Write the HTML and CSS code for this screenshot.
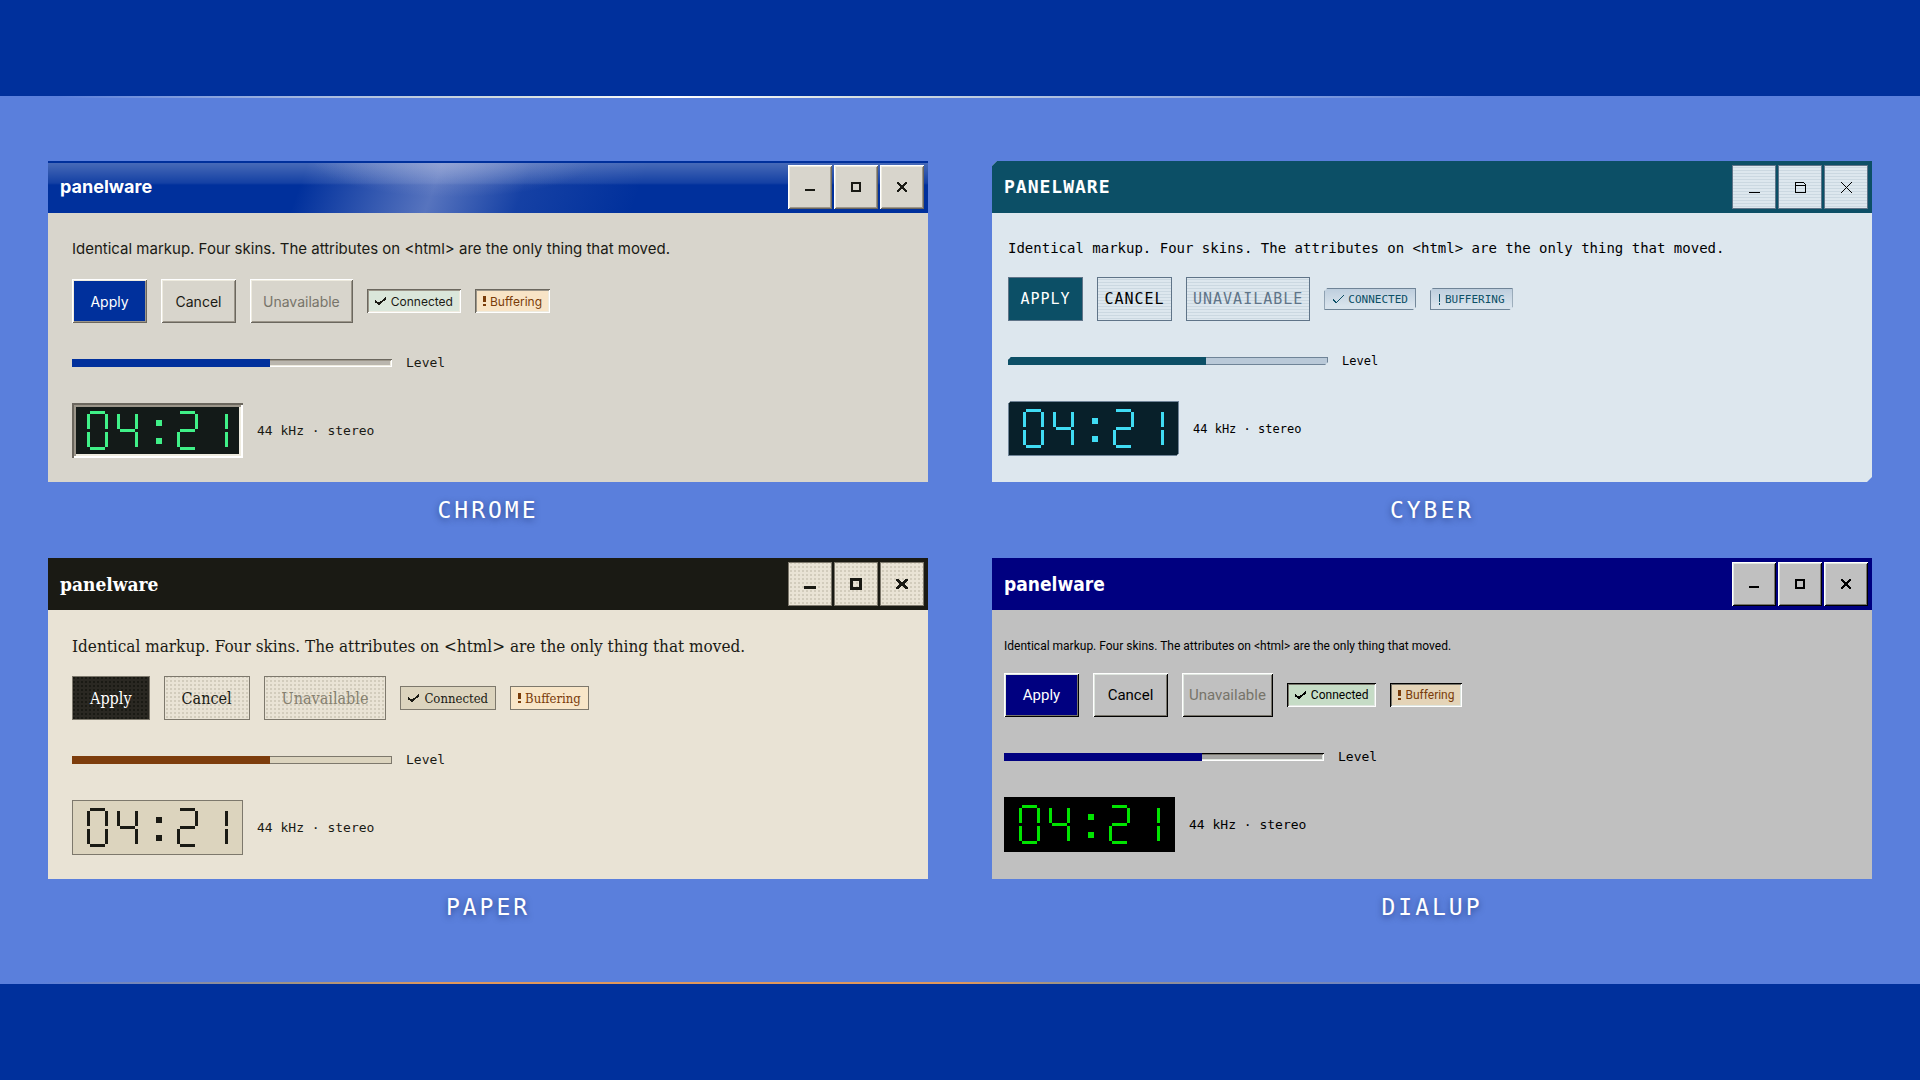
FILE: index.html
```html
<!DOCTYPE html>
<html lang="en">
<head>
<meta charset="utf-8">
<meta name="viewport" content="width=device-width, initial-scale=1">
<title>panelware</title>
<link rel="stylesheet" href="styles.css">
</head>
<body>
<svg class="sprite" aria-hidden="true">
  <defs>
    <symbol id="min" viewBox="0 0 12 12"><path d="M1 8h10v2H1z"/></symbol>
    <symbol id="max" viewBox="0 0 12 12"><path fill-rule="evenodd" d="M1 1h10v10H1zM3 3v6h6V3z"/></symbol>
    <symbol id="close" viewBox="0 0 12 12"><path d="M1 1h2v1h1v1h1v1h2V3h1V2h1V1h2v2h-1v1H9v1H8v2h1v1h1v1h1v2H9v-1H8V9H7V8H5v1H4v1H3v1H1V9h1V8h1V7h1V5H3V4H2V3H1z"/></symbol>
    <symbol id="min-thin" viewBox="0 0 12 12"><path d="M1 11h11v1H1z"/></symbol>
    <symbol id="max-thin" viewBox="0 0 12 12"><path fill-rule="evenodd" d="M1 1h9v1h1v1h1v9H1zM2 2v2h9V3h-1V2zM2 5v6h9V5z"/></symbol>
    <symbol id="close-thin" viewBox="0 0 12 12"><path fill="none" stroke="currentColor" d="M1 1l11 11M12 1L1 12"/></symbol>
    <symbol id="min-bold" viewBox="0 0 12 12"><path d="M0 8h12v3H0z"/></symbol>
    <symbol id="max-bold" viewBox="0 0 12 12"><path fill-rule="evenodd" d="M0 0h12v12H0zM3 3v6h6V3z"/></symbol>
    <symbol id="close-bold" viewBox="0 0 12 12"><path d="M0 1h3v1h1v1h1v1h2V3h1V2h1V1h3v2h-1v1h-1v1H9v2h1v1h1v1h1v2H9v-1H8V9H7V8H5v1H4v1H3v1H0V9h1V8h1V7h1V5H2V4H1V3H0z"/></symbol>
    <symbol id="check" viewBox="0 0 12 10"><path fill="none" stroke="currentColor" stroke-width="2" d="M0 5l4 3 7-6"/></symbol>
    <symbol id="check-thin" viewBox="0 0 12 10"><path fill="none" stroke="currentColor" d="M1 5l3 4 8-8"/></symbol>
    <symbol id="bang" viewBox="0 0 3 12"><path d="M0 1h3v6H0zM0 9h3v2H0z"/></symbol>
    <symbol id="bang-thin" viewBox="0 0 3 12"><path d="M1 1h1v8H1zM1 10h1v2H1z"/></symbol>
    <symbol id="clock" viewBox="0 0 141 39">
      <g><rect x="3" width="15" height="3"/><rect x="3" y="36" width="15" height="3"/><rect y="3" width="3" height="15"/><rect y="21" width="3" height="15"/><rect x="18" y="3" width="3" height="15"/><rect x="18" y="21" width="3" height="15"/></g>
      <g><rect x="30" y="3" width="3" height="15"/><rect x="33" y="18" width="15" height="3"/><rect x="48" y="3" width="3" height="15"/><rect x="48" y="21" width="3" height="15"/></g>
      <g><rect x="69" y="9" width="6" height="6"/><rect x="69" y="27" width="6" height="6"/></g>
      <g><rect x="93" width="15" height="3"/><rect x="108" y="3" width="3" height="15"/><rect x="93" y="18" width="15" height="3"/><rect x="90" y="21" width="3" height="15"/><rect x="93" y="36" width="15" height="3"/></g>
      <g><rect x="138" y="3" width="3" height="15"/><rect x="138" y="21" width="3" height="15"/></g>
    </symbol>
  </defs>
</svg>

<main class="stage">
  <figure class="sample">
    <section class="panel chrome">
      <header class="titlebar">
        <h2 class="title">panelware</h2>
        <button class="winbtn" aria-label="Minimize"><svg><use href="#min"/></svg></button>
        <button class="winbtn" aria-label="Maximize"><svg><use href="#max"/></svg></button>
        <button class="winbtn" aria-label="Close"><svg><use href="#close"/></svg></button>
      </header>
      <div class="content">
        <p class="lead">Identical markup. Four skins. The attributes on &lt;html&gt; are the only thing that moved.</p>
        <div class="row">
          <button class="btn primary">Apply</button>
          <button class="btn">Cancel</button>
          <button class="btn" disabled>Unavailable</button>
          <span class="tag ok"><svg class="tick"><use href="#check"/></svg>Connected</span>
          <span class="tag warn"><svg class="bang"><use href="#bang"/></svg>Buffering</span>
        </div>
        <div class="row">
          <progress class="level" id="level-chrome" max="100" value="62"></progress>
          <label class="note" for="level-chrome">Level</label>
        </div>
        <div class="row">
          <div class="lcd" role="img" aria-label="04:21"><svg><use href="#clock"/></svg></div>
          <span class="note">44 kHz · stereo</span>
        </div>
      </div>
    </section>
    <figcaption class="name">CHROME</figcaption>
  </figure>

  <figure class="sample">
    <section class="panel cyber">
      <header class="titlebar">
        <h2 class="title">PANELWARE</h2>
        <button class="winbtn" aria-label="Minimize"><svg><use href="#min-thin"/></svg></button>
        <button class="winbtn" aria-label="Maximize"><svg><use href="#max-thin"/></svg></button>
        <button class="winbtn" aria-label="Close"><svg><use href="#close-thin"/></svg></button>
      </header>
      <div class="content">
        <p class="lead">Identical markup. Four skins. The attributes on &lt;html&gt; are the only thing that moved.</p>
        <div class="row">
          <button class="btn primary">APPLY</button>
          <button class="btn">CANCEL</button>
          <button class="btn" disabled>UNAVAILABLE</button>
          <span class="tag ok"><svg class="tick"><use href="#check-thin"/></svg>CONNECTED</span>
          <span class="tag warn"><svg class="bang"><use href="#bang-thin"/></svg>BUFFERING</span>
        </div>
        <div class="row">
          <progress class="level" id="level-cyber" max="100" value="62"></progress>
          <label class="note" for="level-cyber">Level</label>
        </div>
        <div class="row">
          <div class="lcd" role="img" aria-label="04:21"><svg><use href="#clock"/></svg></div>
          <span class="note">44 kHz · stereo</span>
        </div>
      </div>
    </section>
    <figcaption class="name">CYBER</figcaption>
  </figure>

  <figure class="sample">
    <section class="panel paper">
      <header class="titlebar">
        <h2 class="title">panelware</h2>
        <button class="winbtn" aria-label="Minimize"><svg><use href="#min-bold"/></svg></button>
        <button class="winbtn" aria-label="Maximize"><svg><use href="#max-bold"/></svg></button>
        <button class="winbtn" aria-label="Close"><svg><use href="#close-bold"/></svg></button>
      </header>
      <div class="content">
        <p class="lead">Identical markup. Four skins. The attributes on &lt;html&gt; are the only thing that moved.</p>
        <div class="row">
          <button class="btn primary">Apply</button>
          <button class="btn">Cancel</button>
          <button class="btn" disabled>Unavailable</button>
          <span class="tag ok"><svg class="tick"><use href="#check"/></svg>Connected</span>
          <span class="tag warn"><svg class="bang"><use href="#bang"/></svg>Buffering</span>
        </div>
        <div class="row">
          <progress class="level" id="level-paper" max="100" value="62"></progress>
          <label class="note" for="level-paper">Level</label>
        </div>
        <div class="row">
          <div class="lcd" role="img" aria-label="04:21"><svg><use href="#clock"/></svg></div>
          <span class="note">44 kHz · stereo</span>
        </div>
      </div>
    </section>
    <figcaption class="name">PAPER</figcaption>
  </figure>

  <figure class="sample">
    <section class="panel dialup">
      <header class="titlebar">
        <h2 class="title">panelware</h2>
        <button class="winbtn" aria-label="Minimize"><svg><use href="#min"/></svg></button>
        <button class="winbtn" aria-label="Maximize"><svg><use href="#max"/></svg></button>
        <button class="winbtn" aria-label="Close"><svg><use href="#close"/></svg></button>
      </header>
      <div class="content">
        <p class="lead">Identical markup. Four skins. The attributes on &lt;html&gt; are the only thing that moved.</p>
        <div class="row">
          <button class="btn primary">Apply</button>
          <button class="btn">Cancel</button>
          <button class="btn" disabled>Unavailable</button>
          <span class="tag ok"><svg class="tick"><use href="#check"/></svg>Connected</span>
          <span class="tag warn"><svg class="bang"><use href="#bang"/></svg>Buffering</span>
        </div>
        <div class="row">
          <progress class="level" id="level-dialup" max="100" value="62"></progress>
          <label class="note" for="level-dialup">Level</label>
        </div>
        <div class="row">
          <div class="lcd" role="img" aria-label="04:21"><svg><use href="#clock"/></svg></div>
          <span class="note">44 kHz · stereo</span>
        </div>
      </div>
    </section>
    <figcaption class="name">DIALUP</figcaption>
  </figure>
</main>
</body>
</html>
```
FILE: styles.css
```css
*, *::before, *::after { box-sizing: border-box; }

body {
  display: flex;
  flex-direction: column;
  min-height: 100vh;
  margin: 0;
  padding: 96px 0;
  background: #00309c;
  font-family: Inter, "Liberation Sans", sans-serif;
}

svg { display: block; fill: currentColor; shape-rendering: crispEdges; }
.sprite { position: absolute; width: 0; height: 0; }

/* Stage: light band with a glint along each edge */
.stage {
  flex: 1;
  display: grid;
  grid-template-columns: 1fr 1fr;
  align-content: center;
  gap: 34px 64px;
  padding: 2px 48px 0;
  background:
    linear-gradient(90deg, transparent 3%, #a9bce0 17%, #d5dfdf 27%, #fff 35%, #d5dfe0 45%, #a9bce0 56%, transparent 77%) top / 100% 2px no-repeat,
    linear-gradient(90deg, transparent 2%, #a09484 15%, #e0985c 23%, #e0985c 50%, #a09484 55%, transparent 78%) bottom / 100% 2px no-repeat,
    #5a7fdc;
}

.sample { display: flex; flex-direction: column; gap: 14px; margin: 0; min-width: 0; }
.name {
  color: #fff;
  font: 23px/28px "DejaVu Sans Mono", monospace;
  letter-spacing: 3px;
  text-align: center;
  text-shadow: 0 2px 6px rgba(0, 20, 70, .5);
}

/* Shared panel structure */
.panel {
  flex: 1;
  min-height: 321px;
  background: var(--face);
  color: var(--ink);
  font-family: var(--font);
}
.titlebar {
  display: flex;
  align-items: center;
  gap: 2px;
  height: 52px;
  padding: 0 4px 0 12px;
  background: var(--title);
  color: #fff;
}
.title { flex: 1; margin: 0; font-size: 18px; font-weight: 700; line-height: 24px; }
.winbtn {
  display: grid;
  place-items: center;
  width: 44px;
  height: 44px;
  padding: 0;
  border: 0;
  background: var(--button);
  color: var(--ink);
  box-shadow: var(--raised);
}
.winbtn svg { width: 12px; height: 12px; }

.content { display: flex; flex-direction: column; gap: 18px; padding: 24px var(--pad); }
.lead { margin: 0; font-size: 15px; line-height: 24px; }
.row { display: flex; align-items: center; gap: 14px; min-height: 44px; }

.btn {
  min-width: 75px;
  height: 44px;
  padding: 0 var(--btn-pad);
  border: 0;
  background: var(--button);
  color: var(--ink);
  font-family: inherit;
  font-size: 14px;
  box-shadow: var(--raised);
}
.btn.primary { background: var(--accent); color: #fff; }
.btn:disabled { color: var(--faint); }

.tag {
  display: flex;
  align-items: center;
  gap: 4px;
  height: 24px;
  padding: 0 8px;
  background: var(--ok);
  font-size: 12px;
  box-shadow: var(--sunken);
}
.tag.warn { background: var(--warn); color: #7a3c0a; }
.tick { width: 12px; height: 10px; }
.bang { width: 3px; height: 12px; }

.level {
  appearance: none;
  display: block;
  width: 320px;
  height: 8px;
  border: 0;
  background: transparent;
}
.level::-webkit-progress-bar { background: var(--track); box-shadow: var(--sunken); }
.level::-webkit-progress-value { background: var(--fill); }

.note { font: 13px/20px "DejaVu Sans Mono", monospace; }

.lcd {
  width: 171px;
  height: 55px;
  padding: 8px 15px;
  background: var(--lcd);
  color: var(--digit);
  box-shadow: var(--lcd-edge);
}
.lcd svg { width: 141px; height: 39px; }

/* Chrome */
.chrome {
  --font: Inter, "Liberation Sans", sans-serif;
  --face: #d8d5cc;
  --ink: #1a1a14;
  --faint: #77746a;
  --title: #00309c;
  --accent: #00309c;
  --button: #d8d5cc;
  --fill: #00309c;
  --track: #bab6ae;
  --ok: #dae6da;
  --warn: #f8e4c6;
  --lcd: #131a18;
  --digit: #40f088;
  --pad: 24px;
  --btn-pad: 13px;
  --raised: inset 1px 1px #fff, inset -1px -1px #6b675e, inset 2px 2px #eeebdf, inset -2px -2px #9c968a;
  --sunken: inset 1px 1px #6b675e, inset -1px -1px #fff, inset 2px 2px #9c968a, inset -2px -2px #eeebdf;
  --lcd-edge: inset 2px 2px #6b675e, inset -2px -2px #fff, inset 4px 4px #9c968a, inset -4px -4px #eeebdf;
}
.chrome .titlebar {
  background:
    linear-gradient(#00309c 2px, transparent 2px),
    radial-gradient(ellipse 140px 36px at 46% 0, rgba(170, 180, 220, .4), transparent),
    linear-gradient(rgba(255, 255, 255, .3), rgba(255, 255, 255, .08) 22px, transparent 24px),
    linear-gradient(110deg, transparent 29%, rgba(150, 165, 215, .58) 44%, rgba(150, 165, 215, .14) 54%, transparent 67%),
    #00309c;
}

/* Cyber */
.cyber {
  --font: "DejaVu Sans Mono", monospace;
  --face: #dde7ee;
  --ink: #000;
  --faint: #5f7488;
  --title: #0c4f66;
  --accent: #0c4f66;
  --button: repeating-linear-gradient(#dde7ee 0 2px, #cbd8e1 2px 3px);
  --fill: #0c4f66;
  --track: #b9c9d8;
  --ok: linear-gradient(#bccddd, #d8e3ec 80%);
  --warn: linear-gradient(#bccddd, #d8e3ec 80%);
  --lcd: #08202a;
  --digit: #40dcf4;
  --pad: 16px;
  --btn-pad: 7px;
  --raised: inset 0 0 0 1px #5f7488;
  --sunken: inset 0 0 0 1px #6f8497;
  --lcd-edge: inset 0 0 0 1px #6f8497;
  clip-path: polygon(5px 0, 100% 0, 100% calc(100% - 5px), calc(100% - 5px) 100%, 0 100%, 0 5px);
}
.cyber .title { letter-spacing: 1px; }
.cyber .lead { font-size: 14px; line-height: 22px; }
.cyber .btn { font-size: 15px; letter-spacing: 1px; }
.cyber .tag { height: 22px; font-size: 11px; color: #0c4f66; }
.cyber .note { font-size: 12px; }
.cyber .tag, .cyber .level, .cyber .lcd {
  clip-path: polygon(3px 0, 100% 0, 100% calc(100% - 3px), calc(100% - 3px) 100%, 0 100%, 0 3px);
}

/* Paper */
.paper {
  --font: "DejaVu Serif Condensed", "DejaVu Serif", serif;
  --face: #e9e3d5;
  --ink: #1a1a14;
  --faint: #85806f;
  --title: #1a1a14;
  --accent: radial-gradient(#1a1a14 1px, transparent 1px) 0 0 / 4px 4px, #2a2822;
  --button: conic-gradient(#d2ccbc 25%, transparent 0) 0 0 / 4px 4px, #e9e3d5;
  --fill: #7d3d0c;
  --track: #dcd4be;
  --ok: #dcd4be;
  --warn: #f8e6c8;
  --lcd: #dcd4be;
  --digit: #1a1a14;
  --pad: 24px;
  --btn-pad: 18px;
  --raised: inset 0 0 0 1px #7d786c;
  --sunken: inset 0 0 0 1px #7d786c;
  --lcd-edge: inset 0 0 0 1px #7d786c;
}
.paper .title { font-size: 19px; }
.paper .lead { font-size: 17px; }
.paper .btn { font-size: 16px; }
.paper .tag { font-size: 13px; }

/* Dialup */
.dialup {
  --font: Roboto, "DejaVu Sans", sans-serif;
  --face: #c0c0c0;
  --ink: #000;
  --faint: #77746a;
  --title: #000080;
  --accent: #000080;
  --button: #c0c0c0;
  --fill: #000080;
  --track: #a6a6a4;
  --ok: #c6dcc6;
  --warn: #e4d4b8;
  --lcd: #000;
  --digit: #00e400;
  --pad: 12px;
  --btn-pad: 7px;
  --raised: inset 1px 1px #fff, inset -1px -1px #000, inset 2px 2px #dfe6df, inset -2px -2px #77746a;
  --sunken: inset 1px 1px #000, inset -1px -1px #fff, inset 2px 2px #77746a, inset -2px -2px #dfe6df;
  --lcd-edge: none;
}
.dialup .title { font-family: "DejaVu Sans Condensed", "DejaVu Sans", sans-serif; font-size: 19px; }
.dialup .lead { padding-top: 3px; font-size: 12px; line-height: 18px; }
.dialup .btn { font-size: 15px; }
```
